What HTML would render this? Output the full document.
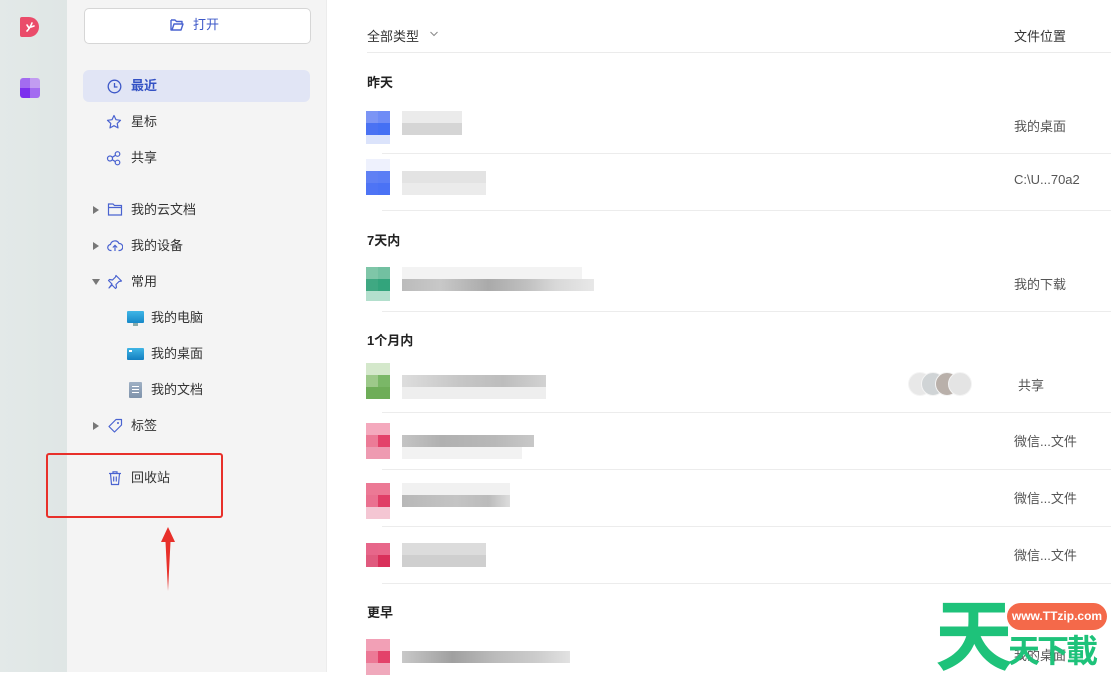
<!DOCTYPE html>
<html><head><meta charset="utf-8">
<style>
*{margin:0;padding:0;box-sizing:border-box}
body{width:1111px;height:672px;overflow:hidden;position:relative;background:#fff;font-family:"Liberation Sans","Noto Sans CJK SC",sans-serif;}
.a{position:absolute}
.rail{left:0;top:0;width:67px;height:672px;background:linear-gradient(90deg,#e3e9e8,#dfe6e5)}
.side{left:67px;top:0;width:260px;height:672px;background:#f4f4f4;border-right:1px solid #ececec}
.nav{position:absolute;left:131px;font-size:13px;color:#333;line-height:16px}
.ico{position:absolute}
.tri{position:absolute;left:93px;width:0;height:0;border-top:4px solid transparent;border-bottom:4px solid transparent;border-left:6px solid #777}
.sec{position:absolute;left:367px;font-size:13px;font-weight:bold;color:#222}
.loc{position:absolute;left:1014px;font-size:13px;color:#555}
.sep{position:absolute;left:382px;right:0;height:1px;background:#ececec}
.c{position:absolute;width:12px;height:12px}
.b{position:absolute;height:12px}
</style></head><body>
<div class="a rail"></div>
<div class="a" style="left:20px;top:17px;width:19px;height:20px;background:#ea4c6a;border-radius:2px 10px 10px 2px"></div>
<svg class="a" style="left:24px;top:20px" width="12" height="14" viewBox="0 0 12 14"><path d="M3 11 Q6 8 8 3 M5 8 L3 5 M7 7 L10 6" stroke="#fff" stroke-width="1.6" fill="none" stroke-linecap="round"/></svg>
<div class="a" style="left:20px;top:78px;width:20px;height:20px;border-radius:3px;overflow:hidden">
<div class="a" style="left:0;top:0;width:10px;height:10px;background:#a36cf0"></div>
<div class="a" style="left:10px;top:0;width:10px;height:10px;background:#c29cf1"></div>
<div class="a" style="left:0;top:10px;width:10px;height:10px;background:#7c2fee"></div>
<div class="a" style="left:10px;top:10px;width:10px;height:10px;background:#a36cf0"></div></div>

<div class="a side"></div>
<div class="a" style="left:84px;top:8px;width:227px;height:36px;background:#fff;border:1px solid #d6d6d6;border-radius:5px"></div>
<svg class="a" style="left:169px;top:17px" width="16" height="16" viewBox="0 0 16 16"><path d="M2 3h4l1.5 1.5H13v2 M2 3v10h10l2-6H5l-2 6" stroke="#4a63d0" stroke-width="1.4" fill="none" stroke-linejoin="round"/></svg>
<div class="nav" style="left:193px;top:17px;color:#3d58c8">打开</div>

<div class="a" style="left:83px;top:70px;width:227px;height:32px;background:#e1e5f5;border-radius:6px"></div>
<svg class="ico" style="left:107px;top:79px" width="15" height="15" viewBox="0 0 15 15"><circle cx="7.5" cy="7.5" r="6.3" stroke="#3d58c8" stroke-width="1.3" fill="none"/><path d="M7.5 4v4h3" stroke="#3d58c8" stroke-width="1.3" fill="none"/></svg>
<div class="nav" style="top:78px;color:#3351c4;font-weight:bold">最近</div>
<svg class="ico" style="left:106px;top:114px" width="16" height="16" viewBox="0 0 16 16"><path d="M8 1.5l2 4.2 4.5.6-3.3 3.1.8 4.5L8 11.7 4 13.9l.8-4.5L1.5 6.3 6 5.7z" stroke="#4a63d0" stroke-width="1.2" fill="none" stroke-linejoin="round"/></svg>
<div class="nav" style="top:114px">星标</div>
<svg class="ico" style="left:106px;top:150px" width="16" height="16" viewBox="0 0 16 16"><circle cx="4" cy="8.5" r="2.5" stroke="#4a63d0" stroke-width="1.2" fill="none"/><circle cx="11.5" cy="4" r="2.3" stroke="#4a63d0" stroke-width="1.2" fill="none"/><circle cx="11.5" cy="12.5" r="2.3" stroke="#4a63d0" stroke-width="1.2" fill="none"/><path d="M6.2 7.3l3.3-2M6.2 9.7l3.3 2" stroke="#4a63d0" stroke-width="1.2"/></svg>
<div class="nav" style="top:150px">共享</div>

<div class="tri" style="top:206px"></div>
<svg class="ico" style="left:107px;top:202px" width="16" height="15" viewBox="0 0 16 15"><path d="M1.5 2h4.5l1.5 1.5h7v9.5h-13z M1.5 5.5h13" stroke="#4a63d0" stroke-width="1.2" fill="none"/></svg>
<div class="nav" style="top:202px">我的云文档</div>
<div class="tri" style="top:242px"></div>
<svg class="ico" style="left:107px;top:238px" width="16" height="15" viewBox="0 0 16 15"><path d="M4.5 12.5H4a3 3 0 0 1-.5-6A4.5 4.5 0 0 1 12 5.5a3.5 3.5 0 0 1 .5 7H11.5 M8 13V7.5M5.8 9.5L8 7.3l2.2 2.2" stroke="#4a63d0" stroke-width="1.2" fill="none"/></svg>
<div class="nav" style="top:238px">我的设备</div>
<div class="a" style="left:92px;top:279px;width:0;height:0;border-left:4px solid transparent;border-right:4px solid transparent;border-top:6px solid #777"></div>
<svg class="ico" style="left:107px;top:274px" width="16" height="16" viewBox="0 0 16 16"><path d="M9 1.5l5.5 5.5-2.5.5-3 3 .5 3-1 1-3.5-3.5L2 14 5 10 1.5 6.5l1-1 3 .5 3-3z" stroke="#4a63d0" stroke-width="1.2" fill="none" stroke-linejoin="round"/></svg>
<div class="nav" style="top:274px">常用</div>

<div class="a" style="left:127px;top:311px;width:17px;height:12px;background:linear-gradient(#3fb6e6,#1688c8);border-radius:1px"></div>
<div class="a" style="left:133px;top:323px;width:5px;height:3px;background:#8aa"></div>
<div class="nav" style="left:151px;top:310px">我的电脑</div>
<div class="a" style="left:127px;top:348px;width:17px;height:12px;background:linear-gradient(#40b5e4,#137fc0);border-radius:1px"></div>
<div class="a" style="left:129px;top:350px;width:3px;height:2px;background:#fff"></div>
<div class="nav" style="left:151px;top:346px">我的桌面</div>
<div class="a" style="left:129px;top:382px;width:13px;height:16px;background:linear-gradient(#9fb0c4,#7f93ab);border-radius:1px"></div>
<div class="a" style="left:132px;top:386px;width:7px;height:1px;background:#fff;box-shadow:0 3px 0 #fff,0 6px 0 #fff"></div>
<div class="nav" style="left:151px;top:382px">我的文档</div>

<div class="tri" style="top:422px"></div>
<svg class="ico" style="left:107px;top:418px" width="16" height="16" viewBox="0 0 16 16"><path d="M9 1.5h5.5V7L7.5 14 2 8.5z" stroke="#4a63d0" stroke-width="1.2" fill="none" stroke-linejoin="round"/><circle cx="11" cy="5" r="1" fill="#4a63d0"/></svg>
<div class="nav" style="top:418px">标签</div>
<svg class="ico" style="left:108px;top:470px" width="14" height="16" viewBox="0 0 14 16"><path d="M1 3.5h12M5 3.5V1.8h4v1.7M2.5 3.5l1 11h7l1-11M5.7 6.5v5M8.3 6.5v5" stroke="#4a63d0" stroke-width="1.2" fill="none"/></svg>
<div class="nav" style="top:470px">回收站</div>

<div class="a" style="left:46px;top:453px;width:177px;height:65px;border:2.5px solid #e8302a;border-radius:3px"></div>
<svg class="a" style="left:158px;top:525px" width="20" height="68" viewBox="0 0 20 68"><path d="M10 2L17 17H12.5L10 66 7.5 17H3z" fill="#e8302a"/></svg>

<!-- main -->
<div class="a" style="left:367px;top:26px;font-size:13px;color:#333">全部类型</div>
<svg class="a" style="left:429px;top:30px" width="10" height="8" viewBox="0 0 10 8"><path d="M1.5 2l3.5 3.5L8.5 2" stroke="#888" stroke-width="1" fill="none"/></svg>
<div class="a" style="left:1014px;top:26px;font-size:13px;color:#333">文件位置</div>
<div class="sep" style="left:367px;top:52px;background:#ebebeb"></div>

<div class="sec" style="top:72px">昨天</div>
<div class="c" style="left:366px;top:111px;background:#7c95f5"></div><div class="c" style="left:378px;top:111px;background:#6f8cf6"></div>
<div class="c" style="left:366px;top:123px;background:#4a72f3"></div><div class="c" style="left:378px;top:123px;background:#4470f4"></div>
<div class="c" style="left:366px;top:135px;background:#dbe3fb;height:9px;width:24px"></div>
<div class="b" style="left:402px;top:111px;width:60px;background:#ebebeb"></div>
<div class="b" style="left:402px;top:123px;width:60px;background:#d5d5d5"></div>
<div class="loc" style="top:116px">我的桌面</div>
<div class="sep" style="top:153px"></div>

<div class="c" style="left:366px;top:159px;background:#eef1fd;width:24px"></div>
<div class="c" style="left:366px;top:171px;background:#5f80f4"></div><div class="c" style="left:378px;top:171px;background:#5b7ef5"></div>
<div class="c" style="left:366px;top:183px;background:#4e74f5"></div><div class="c" style="left:378px;top:183px;background:#4a72f5"></div>
<div class="b" style="left:402px;top:171px;width:84px;background:#e3e3e3"></div>
<div class="b" style="left:402px;top:183px;width:84px;background:#ebebeb"></div>
<div class="loc" style="top:172px">C:\U...70a2</div>
<div class="sep" style="top:210px"></div>

<div class="sec" style="top:230px">7天内</div>
<div class="c" style="left:366px;top:267px;background:#7fc6a8"></div><div class="c" style="left:378px;top:267px;background:#72c0a1"></div>
<div class="c" style="left:366px;top:279px;background:#3fa882"></div><div class="c" style="left:378px;top:279px;background:#33a47c"></div>
<div class="c" style="left:366px;top:291px;background:#b3dfcd;width:24px;height:10px"></div>
<div class="b" style="left:402px;top:267px;width:180px;background:#f3f3f3"></div>
<div class="b" style="left:402px;top:279px;width:192px;background:linear-gradient(90deg,#bbb,#c8c8c8 20%,#aaa 45%,#c0c0c0 65%,#d8d8d8 80%,#e8e8e8)"></div>
<div class="loc" style="top:274px">我的下载</div>
<div class="sep" style="top:311px"></div>

<div class="sec" style="top:330px">1个月内</div>
<div class="c" style="left:366px;top:363px;background:#d4e8cb;width:24px"></div>
<div class="c" style="left:366px;top:375px;background:#9dc98a"></div><div class="c" style="left:378px;top:375px;background:#7ab767"></div>
<div class="c" style="left:366px;top:387px;background:#6ead58;width:24px"></div>
<div class="b" style="left:402px;top:375px;width:144px;background:linear-gradient(90deg,#ddd,#c6c6c6 40%,#bdbdbd 70%,#d2d2d2)"></div>
<div class="b" style="left:402px;top:387px;width:144px;background:#eeeeee"></div>
<div class="a" style="left:908px;top:372px;width:64px;height:24px">
<div class="a" style="left:0;top:0;width:24px;height:24px;border-radius:50%;background:#e8e8e8;border:1px solid #f4f4f4"></div>
<div class="a" style="left:13px;top:0;width:24px;height:24px;border-radius:50%;background:#d0d4d6;border:1px solid #f4f4f4"></div>
<div class="a" style="left:27px;top:0;width:24px;height:24px;border-radius:50%;background:#b9b0aa;border:1px solid #f4f4f4"></div>
<div class="a" style="left:40px;top:0;width:24px;height:24px;border-radius:50%;background:#e4e4e4;border:1px solid #f4f4f4"></div></div>
<div class="loc" style="left:1018px;top:375px">共享</div>
<div class="sep" style="top:412px"></div>

<div class="c" style="left:366px;top:423px;background:#f4a9bd;width:24px"></div>
<div class="c" style="left:366px;top:435px;background:#ec7b97"></div><div class="c" style="left:378px;top:435px;background:#e3426a"></div>
<div class="c" style="left:366px;top:447px;background:#ee9ab1;width:24px"></div>
<div class="b" style="left:402px;top:435px;width:132px;background:linear-gradient(90deg,#c4c4c4,#b0b0b0 30%,#b8b8b8 70%,#c8c8c8)"></div>
<div class="b" style="left:402px;top:447px;width:120px;background:#f2f2f2"></div>
<div class="loc" style="top:431px">微信...文件</div>
<div class="sep" style="top:469px"></div>

<div class="c" style="left:366px;top:483px;background:#ec7995;width:24px"></div>
<div class="c" style="left:366px;top:495px;background:#ea7190"></div><div class="c" style="left:378px;top:495px;background:#e03e66"></div>
<div class="c" style="left:366px;top:507px;background:#f4c6d3;width:24px"></div>
<div class="b" style="left:402px;top:483px;width:108px;background:#f1f1f1"></div>
<div class="b" style="left:402px;top:495px;width:108px;background:linear-gradient(90deg,#b8b8b8,#c4c4c4 50%,#bbb 80%,#ddd)"></div>
<div class="loc" style="top:488px">微信...文件</div>
<div class="sep" style="top:526px"></div>

<div class="c" style="left:366px;top:543px;background:#e7668a"></div><div class="c" style="left:378px;top:543px;background:#e8678a"></div>
<div class="c" style="left:366px;top:555px;background:#e05a7e"></div><div class="c" style="left:378px;top:555px;background:#d9305a"></div>
<div class="b" style="left:402px;top:543px;width:84px;background:#dcdcdc"></div>
<div class="b" style="left:402px;top:555px;width:84px;background:#cfcfcf"></div>
<div class="loc" style="top:545px">微信...文件</div>
<div class="sep" style="top:583px"></div>

<div class="sec" style="top:602px">更早</div>
<div class="c" style="left:366px;top:639px;background:#f2a0b6;width:24px"></div>
<div class="c" style="left:366px;top:651px;background:#ec7996"></div><div class="c" style="left:378px;top:651px;background:#e3426a"></div>
<div class="c" style="left:366px;top:663px;background:#f0a9bc;width:24px"></div>
<div class="b" style="left:402px;top:651px;width:168px;background:linear-gradient(90deg,#c8c8c8,#a0a0a0 30%,#bbb 55%,#ccc 80%,#e2e2e2)"></div>
<div class="loc" style="top:645px">我的桌面</div>

<!-- watermark -->
<div class="a" style="left:935px;top:591px;font-size:78px;line-height:80px;font-weight:bold;color:#1ec27a;font-family:'Noto Sans CJK SC',sans-serif">天</div>
<div class="a" style="left:1007px;top:603px;width:100px;height:27px;border-radius:14px;background:#f4694a;color:#fff;font-size:12px;font-weight:bold;text-align:center;line-height:27px">www.TTzip.com</div>
<div class="a" style="left:1008px;top:631px;font-size:32px;line-height:36px;font-weight:bold;color:#1ec27a;font-family:'Noto Sans CJK SC',sans-serif;letter-spacing:-3px">天下載</div>
</body></html>
